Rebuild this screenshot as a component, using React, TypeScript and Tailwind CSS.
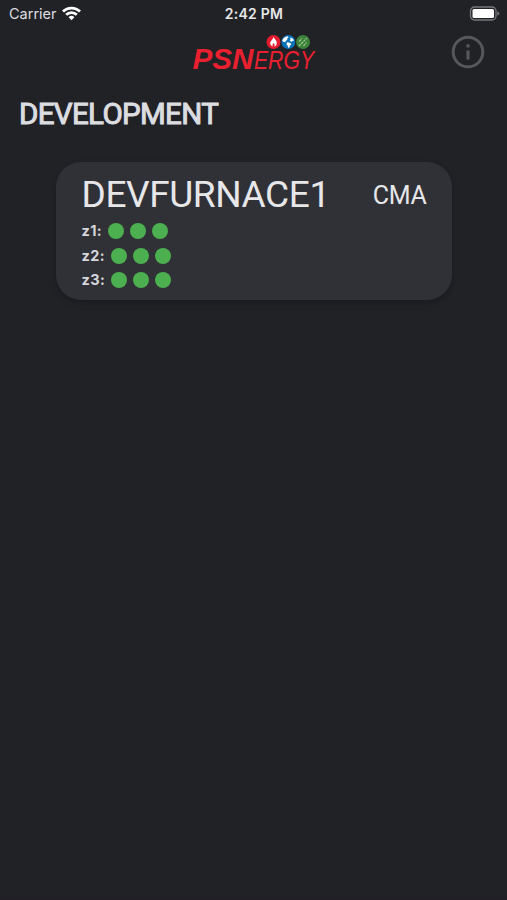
import React from "react";

const ZONES = [
  { name: "z1", sensors: [true, true, true] },
  { name: "z2", sensors: [true, true, true] },
  { name: "z3", sensors: [true, true, true] },
];

function StatusBar() {
  return (
    <div className="grid h-7 grid-cols-3 items-center pl-[9px] pr-[7px] font-['Inter',sans-serif] text-[#dcdde0]">
      <div className="flex items-center gap-[5px]">
        <span className="text-[14.5px]">Carrier</span>
        <svg className="-mt-[2px] h-[15px] w-[19px]" viewBox="0 0 19 15" fill="none" stroke="#fff" strokeWidth="2.8">
          <path d="M1 5.6C5.7.9 13.3.9 18 5.6" />
          <path d="M4.2 8.8c2.9-2.9 7.7-2.9 10.6 0" />
          <path d="M9.5 14.2 6.6 11.3a4.1 4.1 0 0 1 5.8 0Z" fill="#fff" stroke="none" />
        </svg>
      </div>
      <div className="-ml-px -mt-[2px] text-center text-[14px] font-semibold tracking-[0.25px] text-[#e8e8ea]">2:42 PM</div>
      <div className="-mt-[2px] flex justify-end">
        <svg className="h-[15px] w-[31px]" viewBox="0 0 31 15">
          <rect x="1.5" y="1" width="25.5" height="13" rx="4" fill="none" stroke="#77787b" strokeWidth="1.3" />
          <rect x="3.5" y="3" width="21.5" height="9" rx="1.5" fill="#fff" />
          <path d="M28.3 5.2v4.6q2-.8 2-2.3t-2-2.3Z" fill="#77787b" />
        </svg>
      </div>
    </div>
  );
}

function Logo() {
  return (
    <svg
      className="h-[48px] w-[130px] overflow-visible"
      viewBox="189 29 130 48"
      fontFamily="'Liberation Sans', Arial, sans-serif"
      fontStyle="italic"
      fill="#e8202f"
    >
      {/* each word is set narrower than its font, so glyphs stay tall */}
      <g transform="translate(192.5 69.3) scale(1 1.1)">
        <text fontSize="27.5" fontWeight="700" textLength="61" lengthAdjust="spacingAndGlyphs">
          PSN
        </text>
      </g>
      <g transform="translate(254 69.3) scale(1 1.02)">
        <text fontSize="25" textLength="60" lengthAdjust="spacingAndGlyphs">
          ERGY
        </text>
      </g>
      {/* flame */}
      <circle cx="273.5" cy="42" r="7" fill="#e31b2f" />
      <path d="M273.6 36.8c.3 2 3.2 3.5 3.2 6.1 0 1.9-1.2 3.3-2.6 3.6.9-1.4.4-2.5-.6-3.5-.9 1-1.5 2.1-.7 3.5-1.6-.4-2.7-1.6-2.7-3.2 0-2.4 2.8-3.4 3.4-6.5Z" fill="#fff" />
      {/* globe */}
      <circle cx="288.3" cy="42" r="7" fill="#0871b8" />
      <path d="M283.3 38.6c1.2-1.4 2.6-2.2 4.2-2.4l1.1 1.3-1.6 1.2.4 1.4-1.7.7-.4 1.5-2.1-.6-1-1.3ZM290.2 37.2l2.7 1.5 1.2 2-1.5.1-1 1.2-1.9-1.6.9-1.2ZM287.2 42.2l2.8.6 1.5 1.4-1.5 1.2-.6 2.1-1.3.3-.5-2.3-1.2-1.2Z" fill="#fff" />
      {/* leaf */}
      <circle cx="303" cy="42" r="7" fill="#3b8138" />
      <path d="m299 46 7.8-7.8M299.1 41.5l2.8-3M303.4 46l3.2-3.5" stroke="#a9cca1" strokeWidth="1.1" strokeDasharray="2.5 .7" fill="none" />
    </svg>
  );
}

function InfoButton() {
  return (
    <button aria-label="Info" className="-mt-px justify-self-end">
      <svg className="h-[34px] w-[34px]" viewBox="0 0 34 34">
        <circle cx="17" cy="17" r="14.8" fill="none" stroke="#55575b" strokeWidth="3" />
        <path d="M15.4 15.4h3.2v9h-3.2zM15.4 9.2h3.2v3.2h-3.2z" fill="#55575b" />
      </svg>
    </button>
  );
}

function FurnaceCard() {
  return (
    <div className="mx-auto h-[138px] w-[396px] rounded-[25px] bg-[#303136] px-[26px] pt-[10px] shadow-[0_3px_6px_rgba(0,0,0,0.22)]">
      <div className="flex h-[45px] items-center justify-between whitespace-nowrap text-[#e7e7ea]">
        <h2 className="text-[37px] leading-[45px] tracking-[-0.4px]">DEVFURNACE1</h2>
        <span className="-mr-px mt-[2px] text-[25px] tracking-[-0.3px]">CMA</span>
      </div>
      <div className="mt-[2px]">
        {ZONES.map((zone) => (
          <div key={zone.name} className="flex h-[24.5px] items-center">
            <span className="font-['Inter',sans-serif] text-[14.5px] font-bold tracking-[0.4px] text-[#d6d7dc]">{zone.name}:</span>
            <div className="ml-[6px] flex gap-[6px]">
              {zone.sensors.map((ok, i) => (
                <span
                  key={i}
                  className={ok ? "h-[16px] w-[16px] rounded-full bg-[#4caf50]" : "h-[16px] w-[16px] rounded-full bg-[#f44336]"}
                />
              ))}
            </div>
          </div>
        ))}
      </div>
    </div>
  );
}

export default function App() {
  return (
    <div className="flex h-[900px] w-[507px] flex-col overflow-hidden border-b border-[#251c29] bg-[#212226] font-['Roboto',sans-serif]">
      <StatusBar />
      <header className="grid h-[49px] grid-cols-[1fr_auto_1fr] items-center pr-[22px] pl-[22px]">
        <div />
        <Logo />
        <InfoButton />
      </header>
      <h1 className="ml-[19px] mt-[17px] h-[40px] text-[29.5px] leading-[40px] tracking-[-0.65px] text-[#dcdde0] [-webkit-text-stroke:1px_#dcdde0]">
        DEVELOPMENT
      </h1>
      <main className="mt-[28px]">
        <FurnaceCard />
      </main>
    </div>
  );
}
